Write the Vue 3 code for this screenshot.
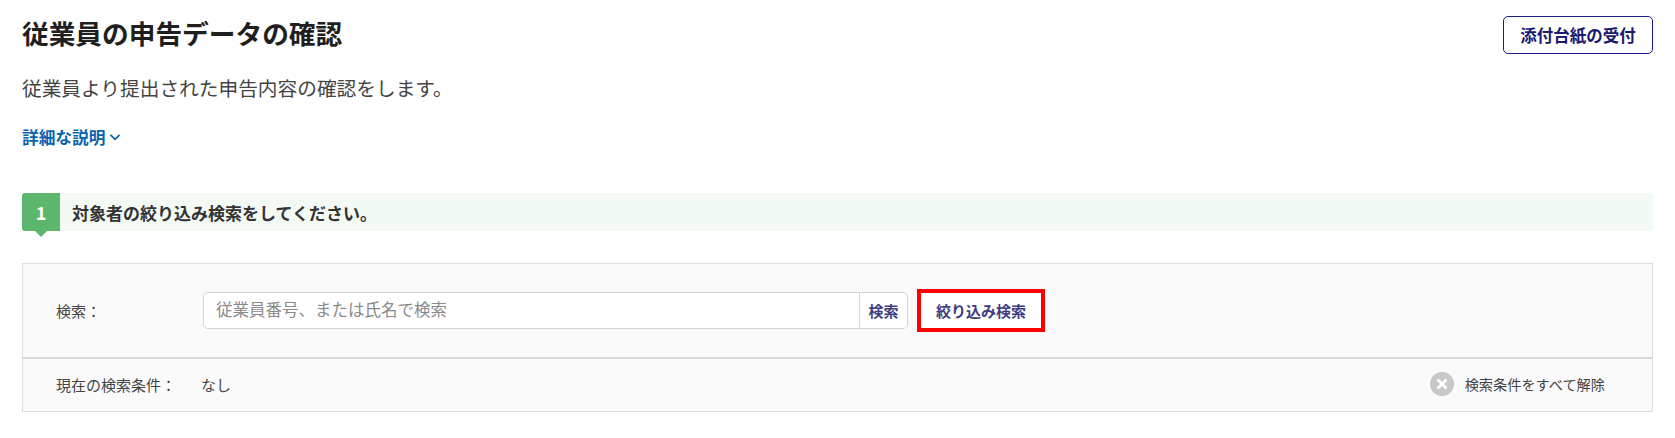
<template>
  <div class="page">
    <!-- 見出し -->
    <div class="head">
      <h1 class="title">従業員の申告データの確認</h1>
      <button class="attach-btn">添付台紙の受付</button>
    </div>
    <p class="lead">従業員より提出された申告内容の確認をします。</p>
    <a class="more">
      詳細な説明
      <svg class="more-icon" width="12" height="12" viewBox="0 0 12 12">
        <path d="M1.5 3.8 L6 8.3 L10.5 3.8" fill="none" stroke="#0b62ad" stroke-width="1.7" />
      </svg>
    </a>

    <!-- ステップ -->
    <div class="step">
      <div class="step-num">1</div>
      <div class="step-text">対象者の絞り込み検索をしてください。</div>
    </div>

    <!-- 検索 -->
    <div class="search-box">
      <div class="search-row">
        <div class="search-label">検索：</div>
        <div class="search-input">
          <div class="placeholder">従業員番号、または氏名で検索</div>
          <button class="search-btn">検索</button>
        </div>
        <div class="narrow-wrap">
          <button class="narrow-btn">絞り込み検索</button>
        </div>
      </div>
      <div class="cond-row">
        <div class="cond-label">現在の検索条件：</div>
        <div class="cond-value">なし</div>
        <a class="clear">
          <svg width="24" height="24" viewBox="0 0 24 24">
            <circle cx="12" cy="12" r="12" fill="#c8c8c8" />
            <path d="M7.5 7.5 L16.5 16.5 M16.5 7.5 L7.5 16.5" stroke="#fff" stroke-width="2.6" />
          </svg>
          <span>検索条件をすべて解除</span>
        </a>
      </div>
    </div>
  </div>
</template>

<script setup>
</script>

<style>
body {
  margin: 0;
  background: #fff;
}
</style>

<style scoped>
.page {
  padding: 16px 22px 26px;
  font-family: "Noto Sans CJK JP", "Noto Sans", sans-serif;
  color: #333;
}

.head {
  display: flex;
  justify-content: space-between;
  align-items: flex-start;
  height: 38px;
}

.title {
  margin: 0;
  font-size: 26.7px;
  line-height: 34px;
  font-weight: 700;
  color: #1f1f1f;
}

.attach-btn {
  width: 150px;
  height: 38px;
  padding: 0;
  font-family: inherit;
  font-size: 16.5px;
  font-weight: 700;
  color: #1a1a6e;
  background: #fff;
  border: 1px solid #1c1c86;
  border-radius: 5px;
}

.lead {
  margin: 20px 0 0;
  font-size: 19.7px;
  line-height: 28px;
  font-weight: 400;
  color: #444;
}

.more {
  display: flex;
  align-items: center;
  gap: 4px;
  margin-top: 23px;
  height: 24px;
  font-size: 16.7px;
  font-weight: 700;
  color: #0b62ad;
}

.step {
  display: flex;
  align-items: center;
  height: 38px;
  margin-top: 44px;
  background: #f3f9f3;
  border-radius: 3px;
}

.step-num {
  position: relative;
  width: 38px;
  height: 38px;
  flex: none;
  background: #5cb76d;
  border-radius: 3px 0 0 3px;
  color: #fff;
  font-size: 18px;
  font-weight: 700;
  line-height: 38px;
  text-align: center;
}

.step-num::after {
  content: "";
  position: absolute;
  left: 13px;
  top: 38px;
  border-left: 6px solid transparent;
  border-right: 6px solid transparent;
  border-top: 6px solid #5cb76d;
}

.step-text {
  margin-left: 12px;
  font-size: 17px;
  font-weight: 700;
  color: #333;
}

.search-box {
  margin-top: 32px;
  background: #fafafa;
  border: 1px solid #dedede;
}

.search-row {
  display: flex;
  align-items: center;
  height: 93px;
  padding-left: 33px;
  border-bottom: 2px solid #d8d8d8;
}

.search-label {
  width: 147px;
  font-size: 15px;
  color: #444;
}

.search-input {
  display: flex;
  width: 705px;
  height: 37px;
  background: #fff;
  border: 1px solid #d4d4d4;
  border-radius: 5px;
  box-sizing: border-box;
}

.placeholder {
  flex: 1;
  padding-left: 12px;
  font-size: 16.5px;
  line-height: 33px;
  color: #8a8a8a;
}

.search-btn {
  width: 48px;
  padding: 0;
  font-family: inherit;
  font-size: 15px;
  font-weight: 700;
  color: #3d3d80;
  background: #fff;
  border: 0;
  border-left: 1px solid #d4d4d4;
  border-radius: 0 5px 5px 0;
}

.narrow-wrap {
  margin-left: 9px;
  border: 4px solid #f00;
}

.narrow-btn {
  display: block;
  width: 120px;
  height: 35px;
  padding: 0;
  font-family: inherit;
  font-size: 15px;
  font-weight: 700;
  color: #3d3d80;
  background: #fff;
  border: 0;
  border-radius: 3px;
}

.cond-row {
  display: flex;
  align-items: center;
  box-sizing: border-box;
  height: 52px;
  padding: 0 47px 2px 33px;
  font-size: 15px;
  color: #444;
}

.cond-label {
  width: 145px;
}

.clear {
  display: flex;
  align-items: center;
  gap: 11px;
  margin-left: auto;
  font-size: 14.2px;
}
</style>
